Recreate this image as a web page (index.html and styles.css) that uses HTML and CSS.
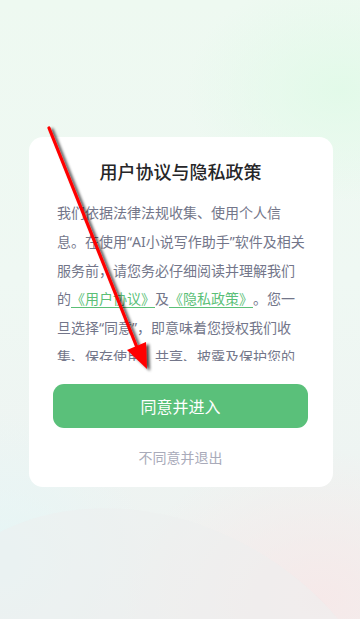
FILE: index.html
```html
<!DOCTYPE html>
<html lang="zh-CN">
<head>
<meta charset="utf-8">
<title>用户协议与隐私政策</title>
<link rel="stylesheet" href="styles.css">
</head>
<body>
<div class="page">
  <div class="bg-shape"></div>
  <div class="card">
    <h1 class="title">用户协议与隐私政策</h1>
    <div class="content">
      <p class="text">我们依据法律法规收集、使用个人信息。在使用“AI小说写作助手”软件及相关服务前，请您务必仔细阅读并理解我们的<a class="link">《用户协议》</a>及<a class="link">《隐私政策》</a>。您一旦选择“同意”，即意味着您授权我们收集、保存使用、共享、披露及保护您的个人信息。</p>
    </div>
    <button class="agree">同意并进入</button>
    <div class="refuse">不同意并退出</div>
  </div>
  <svg class="arrow" width="360" height="619" viewBox="0 0 360 619">
    <defs>
      <filter id="sh" x="-20%" y="-20%" width="140%" height="140%">
        <feGaussianBlur in="SourceAlpha" stdDeviation="1.6"/>
        <feOffset dx="2.5" dy="1.5" result="b"/>
        <feComponentTransfer><feFuncA type="linear" slope="0.7"/></feComponentTransfer>
        <feMerge><feMergeNode/><feMergeNode in="SourceGraphic"/></feMerge>
      </filter>
    </defs>
    <g filter="url(#sh)">
      <line x1="49" y1="128" x2="138" y2="350" stroke="#ff0000" stroke-width="3.2" stroke-linecap="round"/>
      <polygon points="147,369 127,350 146,342" fill="#ff0000"/>
    </g>
  </svg>
</div>
</body>
</html>
```
FILE: styles.css
```css
html, body {
  margin: 0;
  padding: 0;
}
body {
  font-family: "Noto Sans", "Noto Sans CJK SC", sans-serif;
}
.page {
  position: relative;
  width: 360px;
  height: 619px;
  overflow: hidden;
  box-sizing: border-box;
  padding: 137px 27px 0 29px;
  background:
    radial-gradient(ellipse 220px 160px at 340px 90px, rgba(225, 250, 232, 0.9), rgba(225, 250, 232, 0) 70%),
    radial-gradient(ellipse 260px 200px at 320px 600px, rgba(246, 233, 233, 1), rgba(246, 233, 233, 0) 75%),
    radial-gradient(ellipse 200px 200px at 0px 560px, rgba(230, 246, 246, 1), rgba(230, 246, 246, 0) 75%),
    linear-gradient(180deg, #eef9f1 0%, #eff8f3 45%, #eef4f2 75%, #eff1f0 100%);
}
.bg-shape {
  position: absolute;
  left: 30px;
  top: 420px;
  width: 520px;
  height: 420px;
  border-radius: 50%;
  background: rgba(236, 238, 238, 0.55);
  transform: rotate(30deg);
  transform-origin: 0 0;
}
.card {
  position: relative;
  width: 304px;
  height: 350px;
  box-sizing: border-box;
  background: #ffffff;
  border-radius: 14px;
  padding: 22px 25px 0 24px;
  display: flex;
  flex-direction: column;
}
.title {
  margin: 0;
  font-size: 18px;
  line-height: 26px;
  font-weight: 500;
  color: #262628;
  text-align: center;
}
.content {
  margin: 14px 3px 4px 4px;
  height: 162px;
  overflow: hidden;
}
.text {
  margin: 0;
  font-size: 14px;
  line-height: 28.8px;
  color: #73768a;
  text-spacing-trim: space-all;
  line-break: strict;
}
.link {
  color: #5bbf77;
  text-decoration: underline;
  text-decoration-color: #5bbf77;
  text-underline-offset: 3px;
}
.agree {
  margin-top: 19px;
  height: 44px;
  width: 255px;
  border: none;
  border-radius: 11px;
  background: #5ac07a;
  color: #ffffff;
  font-family: "Noto Sans", "Noto Sans CJK SC", sans-serif;
  font-size: 16px;
  padding: 0;
}
.refuse {
  margin-top: 20px;
  text-align: center;
  font-size: 14px;
  line-height: 20px;
  color: #a9abba;
}
.arrow {
  position: absolute;
  left: 0;
  top: 0;
  pointer-events: none;
}
```
